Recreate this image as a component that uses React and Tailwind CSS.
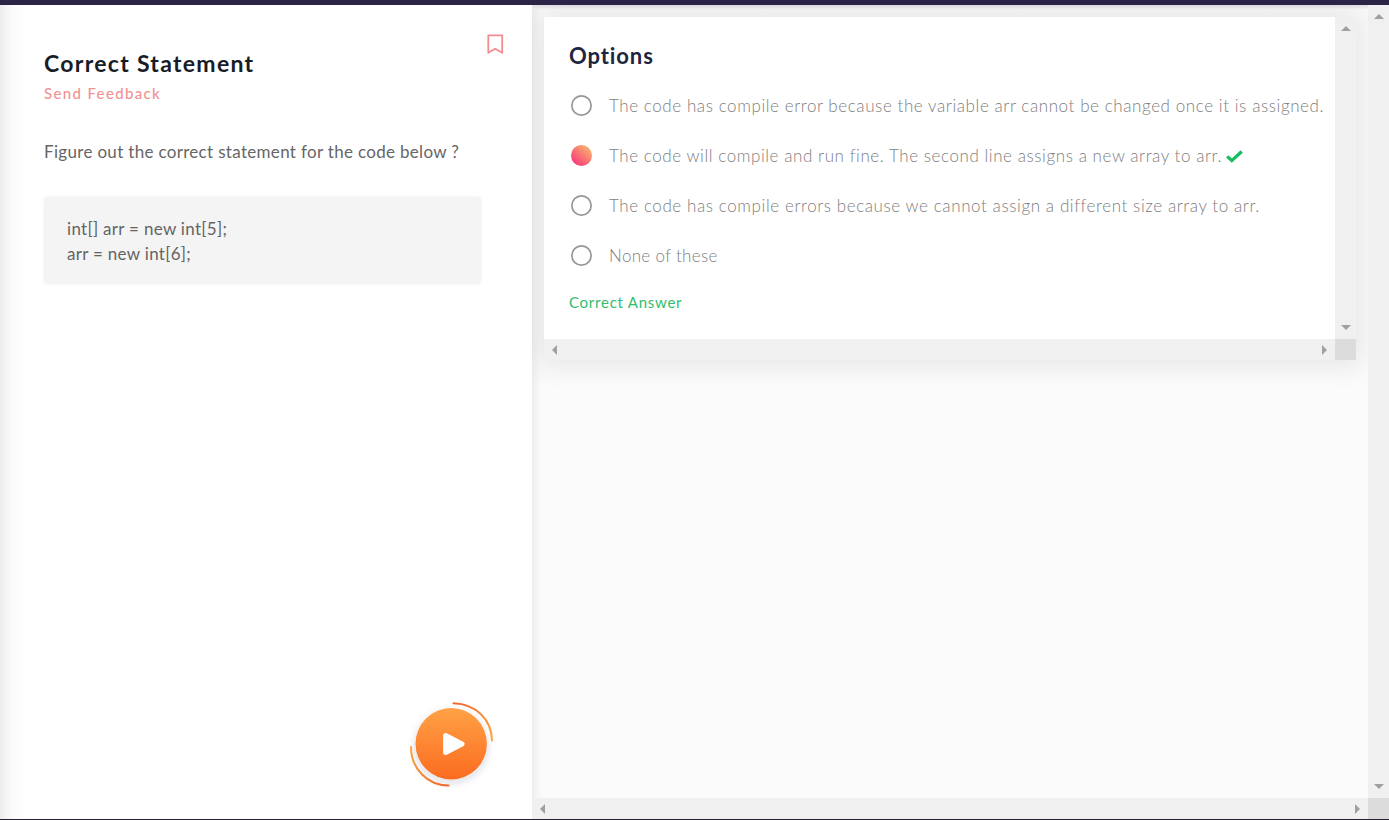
const options = [
  { text: "The code has compile error because the variable arr cannot be changed once it is assigned.", spacing: "tracking-[0.58px]" },
  { text: "The code will compile and run fine. The second line assigns a new array to arr.", spacing: "tracking-[0.57px]", selected: true },
  { text: "The code has compile errors because we cannot assign a different size array to arr.", spacing: "tracking-[0.59px]" },
  { text: "None of these", spacing: "tracking-[0.32px]" },
];

const arrows = {
  up: "M0 5 5 0 10 5Z",
  down: "M0 0H10L5 5Z",
  left: "M5 0V10L0 5Z",
  right: "M0 0 5 5 0 10Z",
};

function Arrow({ dir }) {
  const vertical = dir === "up" || dir === "down";
  return (
    <svg width={vertical ? 10 : 5} height={vertical ? 5 : 10} className="block shrink-0" fill="#a0a0a0">
      <path d={arrows[dir]} />
    </svg>
  );
}

function VerticalBar({ className = "" }) {
  return (
    <div className={`flex w-[21px] shrink-0 flex-col items-center justify-between bg-[#f0f0f0] py-[9px] ${className}`}>
      <Arrow dir="up" />
      <Arrow dir="down" />
    </div>
  );
}

function HorizontalBar({ className = "" }) {
  return (
    <div className={`flex h-[21px] shrink-0 bg-[#f0f0f0] ${className}`}>
      <div className="flex flex-1 items-center justify-between px-2">
        <Arrow dir="left" />
        <Arrow dir="right" />
      </div>
      <div className="w-[21px] bg-[#dcdcdc]" />
    </div>
  );
}

function PlayButton() {
  return (
    <svg width="100" height="100" viewBox="0 0 100 100" className="block">
      <defs>
        <linearGradient id="play" x1="0" y1="0" x2="0" y2="1">
          <stop offset="0" stopColor="#ffa245" />
          <stop offset="1" stopColor="#fb6b20" />
        </linearGradient>
        <linearGradient id="arcRight" x1="0" y1="0" x2="1" y2="1">
          <stop offset="0" stopColor="#f0672a" />
          <stop offset="1" stopColor="#faa83f" />
        </linearGradient>
        <linearGradient id="arcLeft" x1="0" y1="0" x2="1" y2="1">
          <stop offset="0" stopColor="#faa83f" />
          <stop offset="1" stopColor="#f0672a" />
        </linearGradient>
        <filter id="glow" x="-30%" y="-30%" width="160%" height="160%">
          <feDropShadow dx="0" dy="3" stdDeviation="4.5" floodColor="#242450" floodOpacity="0.17" />
        </filter>
      </defs>
      <circle cx="50.2" cy="48.8" r="35.7" fill="url(#play)" filter="url(#glow)" />
      <path d="M52.5 8.2C75 8.8 90.8 25 91 45.5" fill="none" stroke="url(#arcRight)" strokeWidth="2" strokeLinecap="round" />
      <path d="M10 52C10 74 27 90.5 47.5 90.5" fill="none" stroke="url(#arcLeft)" strokeWidth="2" strokeLinecap="round" />
      <path d="M44.6 40.5 61 49 44.6 57.5Z" fill="#fff" stroke="#fff" strokeWidth="5" strokeLinejoin="round" />
    </svg>
  );
}

function Radio({ selected }) {
  return (
    <svg width="21" height="21" viewBox="0 0 21 21" className="mt-[14px] ml-[2px] block shrink-0 self-start">
      <defs>
        <linearGradient id="radioFill" x1="0.15" y1="0.9" x2="0.85" y2="0.1">
          <stop offset="0" stopColor="#f63a78" />
          <stop offset="1" stopColor="#fab26e" />
        </linearGradient>
      </defs>
      {selected ? (
        <circle cx="10.5" cy="10.5" r="10.5" fill="url(#radioFill)" />
      ) : (
        <circle cx="10.5" cy="10.5" r="9.65" fill="#fff" stroke="#979797" strokeWidth="1.7" />
      )}
    </svg>
  );
}

function Option({ option }) {
  return (
    <label className="flex h-[50px] items-center whitespace-nowrap">
      <Radio selected={option.selected} />
      <span className={`ml-[17px] text-[17px] leading-6 font-light text-[#808080] ${option.spacing}`}>{option.text}</span>
      {option.selected && (
        <svg width="17" height="13" viewBox="0 0 17 13" className="ml-1">
          <path d="m1.2 6.4 4.6 4.2L15.7 1.5" fill="none" stroke="#19bd61" strokeWidth="3.3" />
        </svg>
      )}
    </label>
  );
}

export default function App() {
  return (
    <div className="flex h-[820px] w-[1389px] flex-col overflow-hidden border-b border-[#25212f] bg-white font-['Lato',sans-serif]">
      <header className="z-10 h-[5px] shrink-0 bg-[#2b2447]" />
      <main className="flex min-h-0 flex-1">
        <section className="flex w-[532px] shrink-0 flex-col justify-between bg-linear-to-r from-[#ececec] via-[#fafafa] via-[2%] to-white to-[5%]">
          <div className="pl-11">
            <div className="flex justify-between pr-[28px]">
              <div className="pt-[42px]">
                <h1 className="mb-px text-[23px] leading-8 font-bold tracking-[1.3px] whitespace-nowrap text-[#171c26]">Correct Statement</h1>
                <a className="block text-[15px] leading-[26px] font-medium tracking-[1.35px] whitespace-nowrap text-[#ef9295]">Send Feedback</a>
              </div>
              <svg width="18" height="21" viewBox="0 0 18 21" className="mt-[29px]">
                <path d="M2.3 1.3H16.2V18.8L9.2 14.7 2.3 18.8Z" fill="none" stroke="#f48c8f" strokeWidth="1.8" strokeLinejoin="round" />
              </svg>
            </div>
            <p className="mt-[30px] text-[17px] leading-8 tracking-[0.32px] whitespace-nowrap text-[#666]">Figure out the correct statement for the code below ?</p>
            <pre className="mt-[29px] h-[87px] w-[437px] rounded-[4px] bg-[#f4f4f4] pt-[19px] pl-[23px] font-['Lato',sans-serif] text-[17px] leading-[25px] tracking-[0.3px] text-[#646464] shadow-[0_0_3px_#eeeeee]">{"int[] arr = new int[5];\narr = new int[6];"}</pre>
          </div>
          <button className="mb-[24px] ml-[401px] w-[100px]"><PlayButton /></button>
        </section>
        <section className="relative flex min-w-0 flex-1 flex-col overflow-hidden bg-[#fbfbfb] shadow-[inset_8px_0_10px_-5px_#e9e9e9]">
          <div className="flex min-h-0 flex-1">
            <div className="min-w-0 flex-1 overflow-hidden bg-linear-to-b from-[#e1e0e6] to-transparent to-[5px] pt-3 pl-3">
              <div className="flex h-[343px] w-[812px] flex-col shadow-[0_0_26px_6px_rgba(0,0,0,0.085)]">
                <div className="flex min-h-0 flex-1">
                  <div className="min-w-0 flex-1 overflow-hidden bg-white pt-[23px] pl-[25px]">
                    <h2 className="text-[22px] leading-8 font-bold tracking-[0.9px] text-[#1d2540]">Options</h2>
                    <div className="pt-[9px]">
                      {options.map((option) => <Option key={option.text} option={option} />)}
                    </div>
                    <p className="mt-[9px] text-[15px] leading-6 tracking-[0.75px] text-[#31bd6d]">Correct Answer</p>
                  </div>
                  <VerticalBar />
                </div>
                <HorizontalBar />
              </div>
            </div>
            <VerticalBar className="z-10" />
          </div>
          <HorizontalBar className="z-10" />
        </section>
      </main>
    </div>
  );
}
